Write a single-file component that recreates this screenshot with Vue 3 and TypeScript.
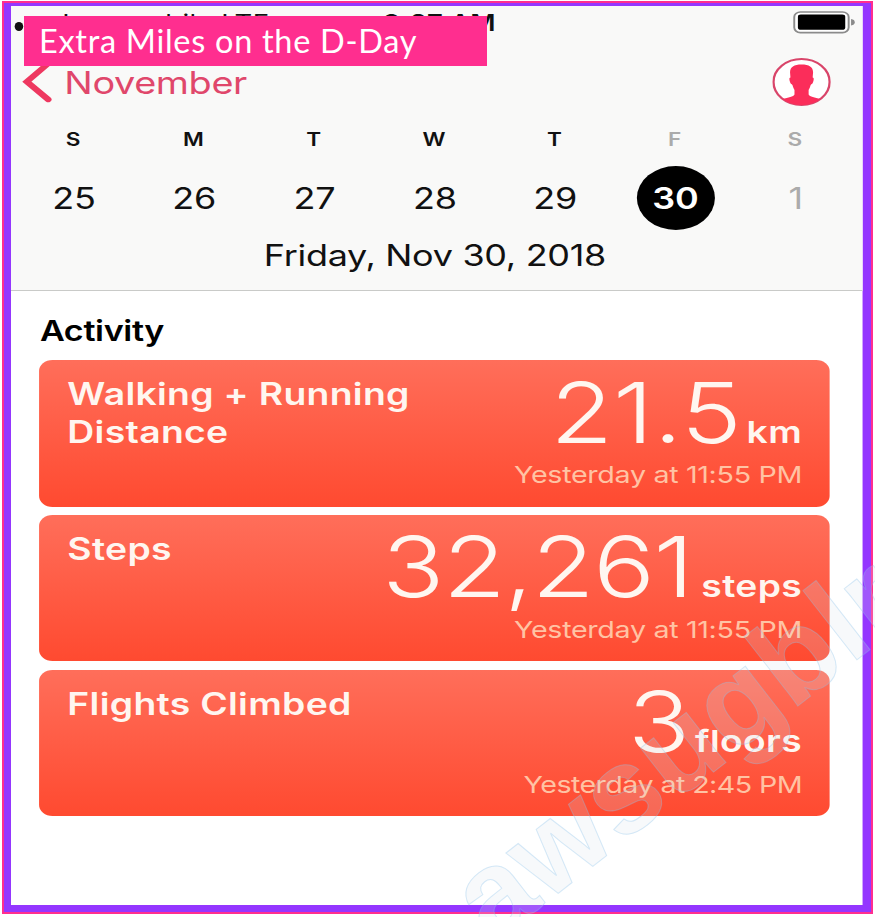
<script setup lang="ts">
interface Day {
  letter: string
  date: number
  selected?: boolean
  muted?: boolean
}

interface Metric {
  id: string
  title: string
  value: string
  unit: string
  time: string
}

const days: Day[] = [
  { letter: 'S', date: 25 },
  { letter: 'M', date: 26 },
  { letter: 'T', date: 27 },
  { letter: 'W', date: 28 },
  { letter: 'T', date: 29 },
  { letter: 'F', date: 30, selected: true, muted: true },
  { letter: 'S', date: 1, muted: true },
]

const metrics: Metric[] = [
  { id: 'distance', title: 'Walking + Running Distance', value: '21.5', unit: 'km', time: 'Yesterday at 11:55 PM' },
  { id: 'steps', title: 'Steps', value: '32,261', unit: 'steps', time: 'Yesterday at 11:55 PM' },
  { id: 'flights', title: 'Flights Climbed', value: '3', unit: 'floors', time: 'Yesterday at 2:45 PM' },
]
</script>

<template>
  <div class="slide">
    <div class="frame">
      <div class="screen">
        <header class="header">
          <div class="status">
            <span class="signal"></span>
            <span class="carrier">Lycamobile LTE</span>
            <span class="clock">9:27 AM</span>
            <svg class="battery" width="52" height="23" viewBox="0 0 52 23">
              <rect x="1" y="1" width="44.6" height="20.6" rx="5" fill="#fff" stroke="#8b8b8b" stroke-width="1.6" />
              <rect x="4" y="3.4" width="38.8" height="15.4" rx="2.4" fill="#000" />
              <path d="M47.6 8 Q50.6 8.6 50.6 11.3 Q50.6 14 47.6 14.6 Z" fill="#8b8b8b" />
            </svg>
          </div>

          <nav class="nav">
            <svg class="chevron" width="26" height="44" viewBox="0 0 26 44">
              <path d="M21.5 3.5 L4 21.7 L21.5 39.5" fill="none" stroke="#ee3860" stroke-width="5.4" stroke-linecap="round" />
            </svg>
            <span class="month">November</span>
            <svg class="avatar" width="48" height="48" viewBox="0 0 48 48">
              <circle cx="24" cy="24" r="23" fill="#fff" stroke="#d9456a" stroke-width="1.9" />
              <path
                d="M24 6.5 C17.5 6.5 14.2 9.5 14.6 15 L14.9 19.5 C13.6 19.6 13.9 22 14.6 24.3 C15.1 26.3 16.2 26.2 16.6 27.2 C17 29.5 18 31 18.2 32 L18.2 36.5 C17.5 39 13 39.3 8.5 41 A23 23 0 0 0 39.5 41 C35 39.3 30.5 39 29.8 36.5 L29.8 32 C30 31 31 29.5 31.4 27.2 C31.8 26.2 32.9 26.3 33.4 24.3 C34.1 22 34.4 19.6 33.1 19.5 L33.4 15 C33.8 9.5 30.5 6.5 24 6.5 Z"
                fill="#fb2d5a"
              />
            </svg>
          </nav>

          <div class="week letters">
            <span v-for="(d, i) in days" :key="i" class="letter" :class="{ muted: d.muted }">{{ d.letter }}</span>
          </div>
          <div class="week dates">
            <span v-for="d in days" :key="d.date" class="date" :class="{ muted: d.muted, selected: d.selected }">{{ d.date }}</span>
          </div>
          <div class="full-date">Friday, Nov 30, 2018</div>
        </header>

        <main class="body">
          <h2 class="section">Activity</h2>
          <div class="cards">
            <article v-for="m in metrics" :key="m.id" class="card" :class="m.id">
              <h3 class="title">{{ m.title }}</h3>
              <div class="reading">
                <div class="amount">
                  <span class="value">{{ m.value }}</span>
                  <span class="unit">{{ m.unit }}</span>
                </div>
                <div class="time">{{ m.time }}</div>
              </div>
            </article>
          </div>
        </main>
      </div>
    </div>

    <div class="banner"><span>Extra Miles on the D-Day</span></div>

    <svg class="watermark" width="875" height="917" viewBox="0 0 875 917">
      <text transform="translate(492 945) rotate(-38)">awsugblr</text>
    </svg>
  </div>
</template>

<style>
body {
  margin: 0;
  background: #fff;
}
</style>

<style scoped>
.slide {
  position: relative;
  box-sizing: border-box;
  width: 875px;
  height: 917px;
  padding: 1px 2px 3px;
  overflow: hidden;
  background: #fff;
}

.frame {
  box-sizing: border-box;
  width: 871px;
  height: 913px;
  border: 2px solid #ff2e8f;
  box-shadow: inset 0 0 0 20px #9436ff;
  padding: 3px 8px 7px 7px;
  overflow: hidden;
}

/* The phone screen is drawn at its own proportions, then widened. */
.screen {
  width: 698.4px;
  height: 899px;
  transform: scaleX(1.22);
  transform-origin: 0 0;
  background: #fff;
  font-family: Inter, "Liberation Sans", sans-serif;
  color: #111;
}

.header {
  height: 284px;
  background: #f9f9f8;
  border-bottom: 1px solid #c9cac8;
}

.status {
  display: flex;
  height: 40px;
  line-height: 34px;
  font-size: 22.5px;
}

.signal {
  width: 7px;
  height: 9px;
  margin: 16px 0 0 3px;
  border-radius: 50%;
  background: #111;
}

.carrier {
  width: 263px;
  margin-left: 32px;
  letter-spacing: 0.35px;
  white-space: nowrap;
}

.clock {
  font-weight: 600;
  letter-spacing: 0.15px;
  white-space: nowrap;
}

.battery {
  margin: 5px 5.8px 0 auto;
}

.nav {
  display: flex;
  align-items: center;
  height: 72px;
  padding: 0 26.5px 0 9px;
}

.month {
  margin-left: 8.7px;
  font-size: 31px;
  line-height: 41px;
  letter-spacing: -0.3px;
  color: #e0476b;
}

.avatar {
  margin-left: auto;
}

.week {
  display: grid;
  grid-template-columns: repeat(7, 98.6px);
  justify-items: center;
  align-items: center;
  padding-left: 1.7px;
}

.letters {
  height: 42px;
  font-size: 18.5px;
  font-weight: 600;
}

.dates {
  height: 76px;
  padding-left: 2.3px;
  font-size: 29.5px;
  letter-spacing: -0.2px;
}

.date {
  width: 64px;
  height: 64px;
  border-radius: 50%;
  line-height: 64px;
  text-align: center;
}

.muted {
  color: #ababab;
}

.date.selected {
  background: #000;
  color: #fff;
  font-weight: 600;
}

.full-date {
  height: 38px;
  padding-right: 3.4px;
  line-height: 38px;
  font-size: 29.5px;
  letter-spacing: -0.25px;
  text-align: center;
}

.body {
  padding: 22px 27px 0 23px;
}

.section {
  margin: 0 0 11px 0.7px;
  font-size: 28px;
  font-weight: 600;
  line-height: 36px;
  letter-spacing: -0.3px;
  color: #000;
}

.cards {
  display: grid;
  gap: 8.2px;
}

.card {
  box-sizing: border-box;
  display: flex;
  justify-content: space-between;
  height: 146.6px;
  padding: 12.5px 23px 0 23.2px;
  border-radius: 11px;
  background: linear-gradient(#ff6e5a, #ff4a30);
  color: #fff6f0;
}

.title {
  width: 300px;
  margin: 2.7px -80px 0 0;
  font-size: 30.6px;
  font-weight: 600;
  line-height: 37.8px;
  letter-spacing: 0.25px;
}

.reading {
  text-align: right;
  white-space: nowrap;
}

.amount {
  display: flex;
  justify-content: flex-end;
  align-items: baseline;
  height: 80px;
  line-height: 80px;
}

.value {
  font-size: 84px;
  font-weight: 300;
}

.steps .value {
  letter-spacing: -1.2px;
}

.unit {
  margin-left: 4px;
  font-size: 30.5px;
  font-weight: 600;
  letter-spacing: 0.3px;
}

.steps .unit {
  margin-left: 7.4px;
}

.time {
  margin-top: 7.5px;
  font-size: 23.5px;
  line-height: 30px;
  letter-spacing: -0.27px;
  color: #ffc3a4;
}

.flights .time {
  letter-spacing: -0.48px;
}

.banner {
  position: absolute;
  left: 24px;
  top: 16px;
  box-sizing: border-box;
  width: 463px;
  height: 49.5px;
  padding-left: 15px;
  background: #ff2e8f;
  color: #fff;
  font: 32.5px/50px Lato, "Open Sans", sans-serif;
  letter-spacing: 0.7px;
  white-space: nowrap;
}

.watermark {
  position: absolute;
  left: 0;
  top: 0;
  pointer-events: none;
}

.watermark text {
  font: bold 121px "Liberation Sans", sans-serif;
  letter-spacing: 0.7px;
  fill: rgba(215, 225, 235, 0.2);
  stroke: rgba(140, 195, 235, 0.35);
  stroke-width: 1;
}
</style>
